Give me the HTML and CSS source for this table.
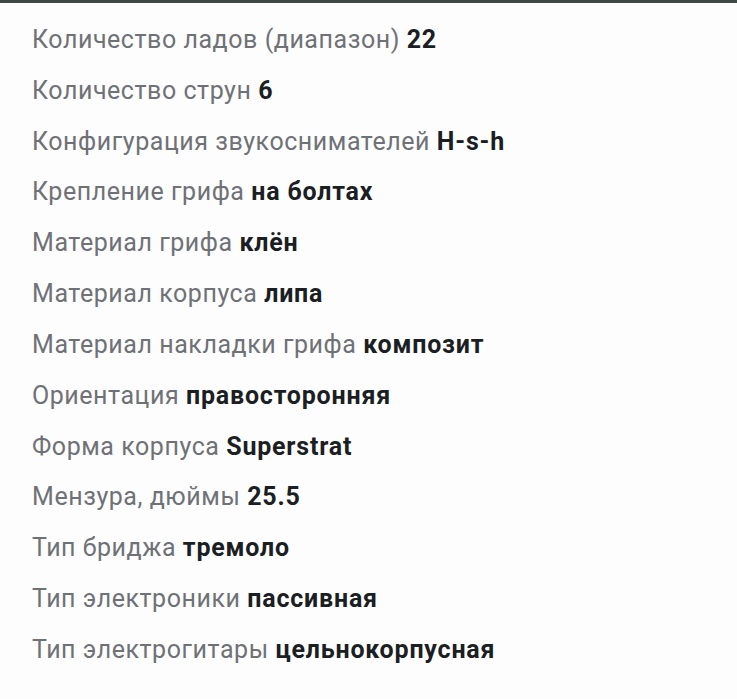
FILE: index.html
```html
<!DOCTYPE html>
<html lang="ru">
<head>
<meta charset="utf-8">
<link rel="stylesheet" href="styles.css">
</head>
<body>
<div class="topbar"></div>
<ul class="specs">
  <li><span class="label">Количество ладов (диапазон)</span> <b class="value">22</b></li>
  <li><span class="label">Количество струн</span> <b class="value">6</b></li>
  <li><span class="label">Конфигурация звукоснимателей</span> <b class="value">H-s-h</b></li>
  <li><span class="label">Крепление грифа</span> <b class="value">на болтах</b></li>
  <li><span class="label">Материал грифа</span> <b class="value">клён</b></li>
  <li><span class="label">Материал корпуса</span> <b class="value">липа</b></li>
  <li><span class="label">Материал накладки грифа</span> <b class="value">композит</b></li>
  <li><span class="label">Ориентация</span> <b class="value">правосторонняя</b></li>
  <li><span class="label">Форма корпуса</span> <b class="value">Superstrat</b></li>
  <li><span class="label">Мензура, дюймы</span> <b class="value">25.5</b></li>
  <li><span class="label">Тип бриджа</span> <b class="value">тремоло</b></li>
  <li><span class="label">Тип электроники</span> <b class="value">пассивная</b></li>
  <li><span class="label">Тип электрогитары</span> <b class="value">цельнокорпусная</b></li>
</ul>
</body>
</html>
```

FILE: styles.css
```css
html, body {
  margin: 0;
  padding: 0;
  background: #fdfdfd;
}
body {
  font-family: Roboto, "Noto Sans", sans-serif;
  width: 737px;
  height: 699px;
  overflow: hidden;
}
.topbar {
  height: 3px;
  background: #3d4a45;
}
.specs {
  list-style: none;
  margin: 0;
  padding: 12px 0 0 32px;
}
.specs li {
  font-size: 25px;
  line-height: 50.82px;
  height: 50.82px;
  letter-spacing: 0.55px;
  white-space: nowrap;
}
.label {
  color: #6e7176;
}
.value {
  color: #1b1e23;
  font-weight: 700;
  letter-spacing: 0.8px;
}
```
